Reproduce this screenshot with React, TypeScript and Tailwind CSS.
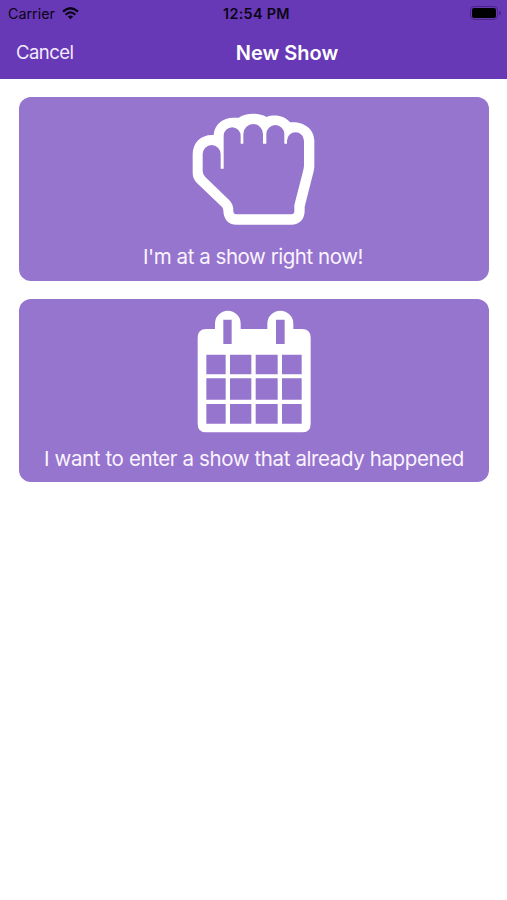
function StatusBar() {
  return (
    <div className="grid h-7 grid-cols-3 items-center pr-[6px] pl-2 text-[#0b0416]">
      <div className="flex items-center gap-[7px]">
        <span className="text-[14.3px] leading-none">Carrier</span>
        <svg className="mb-px h-[13px] w-[17px]" viewBox="0 0 51 39" fill="none" stroke="currentColor">
          <path d="M3 14 Q25.5 -6 48 14" strokeWidth="7" />
          <path d="M11 23 Q25.5 9 40 23" strokeWidth="6.5" />
          <path d="M17.5 28.5 Q25.5 22 33.5 28.5 L25.5 37 Z" fill="currentColor" stroke="none" />
        </svg>
      </div>
      <span className="pl-1 text-center text-[14.3px] leading-none font-semibold tracking-[0.35px] whitespace-nowrap">
        12:54 PM
      </span>
      <div className="mb-[2px] flex items-center justify-end">
        <div className="h-[14px] w-[28px] rounded-[4px] border border-[#4a2588] p-px">
          <div className="h-full w-full rounded-[2px] bg-black"></div>
        </div>
        <div className="ml-px h-1 w-[2px] rounded-r-full bg-[#4a2588]"></div>
      </div>
    </div>
  );
}

function NavBar() {
  return (
    <div className="grid h-[49px] grid-cols-3 items-center px-4 text-white">
      <span className="text-[18.5px] leading-none tracking-[-0.55px] text-[#f4ebff]">Cancel</span>
      <h1 className="-mx-8 pl-[67px] text-center text-[20px] leading-none font-semibold whitespace-nowrap">
        New Show
      </h1>
    </div>
  );
}

function FistIcon() {
  return (
    <svg className="mr-[2px] h-[130px] w-[147px]" viewBox="0 0 441 390" fill="white">
      <path
        fillRule="evenodd"
        d="M38 148 C38 113 63 90 95 90 H101 C103 58 128 38 160 38 H176 C196 23 240 23 259 36 C284 26 316 33 330 52 C369 48 403 70 403 108 V183 Q403 190 401 199 L374 305 V317 C374 343 358 359 334 359 H170 C144 359 130 342 130 315 Q129 308 123 303 L50 233 Q38 221 38 204 Z
        M68 148 A27 28 0 0 1 122 148 V191 H131 V93 A25.5 26 0 0 1 182 93 V116 H190 V87 A29.5 30 0 0 1 249 87 V116 H259 V87 A27 27 0 0 1 313 87 V116 H321 V107 A25.5 25.5 0 0 1 372 107 V180 Q372 187 370 195 L343 300 V319 Q343 328 334 328 H169 Q160 328 160 318 Q160 297 148 286 L76 216 Q68 208 68 199 Z"
      />
    </svg>
  );
}

function CalendarIcon() {
  return (
    <svg className="ml-px h-[140px] w-[140px]" viewBox="0 0 420 420" fill="white">
      <path
        fillRule="evenodd"
        d="M64 87 H90 V71 A38.5 39 0 0 1 167 71 V87 H247 V71 A39 39 0 0 1 325 71 V87 H351 Q377 87 377 113 V371 Q377 397 351 397 H64 Q38 397 38 371 V113 Q38 87 64 87 Z
        M115 59 H140 V132 H115 Z M273 59 H299 V132 H273 Z
        M64 164 H122 V223 H64 Z M135 164 H199 V223 H135 Z M212 164 H278 V223 H212 Z M291 164 H350 V223 H291 Z
        M64 235 H122 V299 H64 Z M135 235 H199 V299 H135 Z M212 235 H278 V299 H212 Z M291 235 H350 V299 H291 Z
        M64 312 H122 V371 H64 Z M135 312 H199 V371 H135 Z M212 312 H278 V371 H212 Z M291 312 H350 V371 H291 Z"
      />
    </svg>
  );
}

export default function App() {
  return (
    <div className="min-h-screen bg-white font-['Inter','Liberation_Sans',sans-serif]">
      <header className="h-[79px] bg-[#6739b6]">
        <StatusBar />
        <NavBar />
      </header>

      <main className="flex flex-col gap-[18px] pt-[18px] pr-[18px] pl-[19px]">
        <button className="flex h-[184px] flex-col items-center rounded-[12px] bg-[#9575cd] pt-2 text-[#fbf3ff]">
          <FistIcon />
          <span className="mt-[9px] pr-[2px] text-[20.5px] leading-[26px] tracking-[-0.46px] whitespace-nowrap">
            I'm at a show right now!
          </span>
        </button>

        <button className="flex h-[183px] flex-col items-center rounded-[12px] bg-[#9575cd] pt-px text-[#fbf3ff]">
          <CalendarIcon />
          <span className="mt-[6px] text-[20.5px] leading-[26px] tracking-[-0.39px] whitespace-nowrap">
            I want to enter a show that already happened
          </span>
        </button>
      </main>
    </div>
  );
}
